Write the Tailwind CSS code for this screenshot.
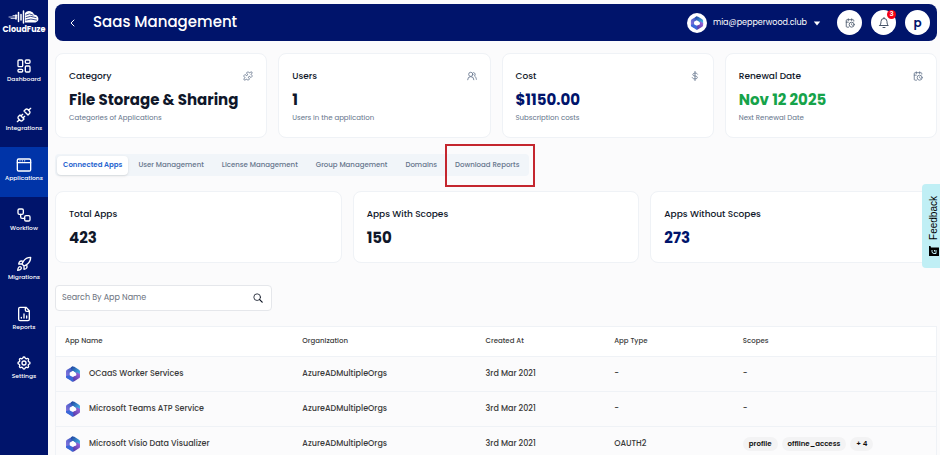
<!DOCTYPE html>
<html lang="en">
<head>
  <meta charset="UTF-8">
  <meta name="viewport" content="width=device-width, initial-scale=1.0">
  <title>Saas Management</title>
  <script src="https://cdn.jsdelivr.net/npm/@tailwindcss/browser@4"></script>
</head>
<body class="bg-[#fbfbfc] font-['Poppins','Inter',sans-serif] text-[#0f172a]">
  <!-- shared icons -->
  <svg class="absolute size-0" aria-hidden="true">
    <defs>
      <linearGradient id="m1" x1="0" y1="1" x2="1" y2="0"><stop offset="0" stop-color="#9a7be6"/><stop offset="1" stop-color="#2150b8"/></linearGradient>
      <linearGradient id="m2" x1="0" y1="0" x2="1" y2="1"><stop offset="0" stop-color="#1d3f9c"/><stop offset="1" stop-color="#4cc3f0"/></linearGradient>
      <linearGradient id="m3" x1="1" y1="0" x2="0" y2="1"><stop offset="0" stop-color="#a56be0"/><stop offset="1" stop-color="#43309c"/></linearGradient>
      <symbol id="m365" viewBox="0 0 24 24">
        <path fill="url(#m1)" d="M12 .5 3 5.500Q1.500 6.400 1.500 8v8q0 1.600 1.500 2.500l4 1.700V10l6-3.500z"/>
        <path fill="url(#m2)" d="M10 1.300Q12 .2 14 1.300l7 4.200Q22.500 6.400 22.500 8v5.500L17 11.500 12 7.500Q9 6 9 3.500 9 1.900 10 1.300z"/>
        <path fill="url(#m3)" d="M22.500 12v4q0 1.600-1.500 2.500l-7 4.200q-2 1.100-4 0L9 17l8-3V9z"/>
        <path fill="#3a68d8" d="M1.500 15v1q0 1.600 1.500 2.500l7 4.200q1.500.8 3 .3l-1-6-5-3z"/>
        <path fill="#fff" d="m12.500 8 3.500 2.300v4L12 16.300l-4-2.300v-3.700z"/>
      </symbol>
      <symbol id="calendar-clock" viewBox="0 0 24 24" fill="none" stroke="currentColor" stroke-width="2" stroke-linecap="round" stroke-linejoin="round">
        <path d="M21 7.500V6a2 2 0 0 0-2-2H5a2 2 0 0 0-2 2v14a2 2 0 0 0 2 2h3.500M16 2v4M8 2v4M3 10h5M17.500 17.500 16 16.300V14"/><circle cx="16" cy="16" r="6"/>
      </symbol>
    </defs>
  </svg>

  <div class="flex h-screen overflow-hidden">
    <aside class="flex w-12 shrink-0 flex-col bg-[#00146b] pb-15 text-white">
      <a href="#" class="flex h-12 flex-col items-center pt-2.5">
        <svg class="h-3.5 w-8" viewBox="0 0 64 28" fill="none" stroke="#fff" stroke-linecap="round">
          <path stroke-width="1.500" d="M2 14h16M6 17h10M10 11h8"/>
          <path stroke-width="3" d="M16 10v8M21 5v18M26 9v11M31 2v24"/>
          <path fill="#fff" stroke="none" d="M34 6q5-6 11-3.500Q51 4 52 9q6 0 8 5 3 8-5 11H34z"/>
          <path stroke="#00146b" stroke-width="1.500" d="M36 10q7-5 14 0M36 15q9-5 20 0M36 20q9-4 21 0"/>
        </svg>
        <span class="text-[8px] leading-3 font-bold">CloudFuze</span>
      </a>
      <nav class="flex flex-1 flex-col text-[6px] leading-2.5 font-medium">
        <a href="#" class="flex flex-1 flex-col items-center justify-center pb-1">
          <svg class="size-4" viewBox="0 0 24 24" fill="none" stroke="currentColor" stroke-width="2" stroke-linejoin="round"><rect x="3" y="3" width="7" height="10" rx="1.500"/><rect x="14" y="3" width="7" height="5" rx="1.500"/><rect x="14" y="12" width="7" height="9" rx="1.500"/><rect x="3" y="17" width="7" height="4" rx="1.500"/></svg>
          Dashboard
        </a>
        <a href="#" class="flex flex-1 flex-col items-center justify-center pb-1">
          <svg class="size-4" viewBox="0 0 24 24" fill="none" stroke="currentColor" stroke-width="2" stroke-linecap="round" stroke-linejoin="round"><path d="m19 5 3-3M2 22l3-3M6.300 20.300a2.400 2.400 0 0 0 3.400 0L12 18l-6-6-2.300 2.300a2.400 2.400 0 0 0 0 3.400zM7.500 13.500 10 11M10.500 16.500 13 14M12 6l6 6 2.300-2.300a2.400 2.400 0 0 0 0-3.400l-2.600-2.600a2.400 2.400 0 0 0-3.400 0z"/></svg>
          Integrations
        </a>
        <a href="#" class="flex flex-1 flex-col items-center justify-center bg-[#0034a8] pb-1">
          <svg class="size-4" viewBox="0 0 24 24" fill="none" stroke="currentColor" stroke-width="2" stroke-linecap="round" stroke-linejoin="round"><rect x="2" y="3" width="20" height="18" rx="2"/><path d="M2 8.500h20M6 5.800h.01M9.500 5.800h.01M13 5.800h.01"/></svg>
          Applications
        </a>
        <a href="#" class="flex flex-1 flex-col items-center justify-center pb-1">
          <svg class="size-4" viewBox="0 0 24 24" fill="none" stroke="currentColor" stroke-width="2" stroke-linecap="round" stroke-linejoin="round"><rect x="3" y="3" width="8" height="8" rx="2"/><path d="M7 11v4a2 2 0 0 0 2 2h4"/><rect x="13" y="13" width="8" height="8" rx="2"/></svg>
          Workflow
        </a>
        <a href="#" class="flex flex-1 flex-col items-center justify-center pb-1">
          <svg class="size-4" viewBox="0 0 24 24" fill="none" stroke="currentColor" stroke-width="2" stroke-linecap="round" stroke-linejoin="round"><path d="M4.500 16.500c-1.500 1.260-2 5-2 5s3.740-.5 5-2c.71-.84.7-2.130-.09-2.910a2.180 2.180 0 0 0-2.910-.09zM12 15l-3-3a22 22 0 0 1 2-3.950A12.880 12.880 0 0 1 22 2c0 2.720-.78 7.500-6 11a22.350 22.350 0 0 1-4 2zM9 12H4s.55-3.030 2-4c1.620-1.080 5 0 5 0M12 15v5s3.030-.55 4-2c1.080-1.620 0-5 0-5"/></svg>
          Migrations
        </a>
        <a href="#" class="flex flex-1 flex-col items-center justify-center pb-1">
          <svg class="size-4" viewBox="0 0 24 24" fill="none" stroke="currentColor" stroke-width="2" stroke-linecap="round" stroke-linejoin="round"><path d="M15 2H6a2 2 0 0 0-2 2v16a2 2 0 0 0 2 2h12a2 2 0 0 0 2-2V7zM14 2v4a2 2 0 0 0 2 2h4M8 18v-1M12 18v-6M16 18v-3"/></svg>
          Reports
        </a>
        <a href="#" class="flex flex-1 flex-col items-center justify-center pb-1">
          <svg class="size-4" viewBox="0 0 24 24" fill="none" stroke="currentColor" stroke-width="2" stroke-linecap="round" stroke-linejoin="round"><path d="M10.300 4.300c.4-1.750 2.970-1.750 3.400 0a1.720 1.720 0 0 0 2.570 1.070c1.540-.94 3.300.82 2.370 2.370a1.720 1.720 0 0 0 1.060 2.570c1.760.43 1.760 2.930 0 3.360a1.720 1.720 0 0 0-1.060 2.570c.94 1.540-.83 3.310-2.370 2.370a1.720 1.720 0 0 0-2.570 1.070c-.43 1.750-2.970 1.750-3.400 0a1.720 1.720 0 0 0-2.570-1.070c-1.540.94-3.310-.83-2.370-2.370a1.720 1.720 0 0 0-1.060-2.570c-1.760-.43-1.760-2.930 0-3.360a1.720 1.720 0 0 0 1.060-2.570c-.94-1.540.83-3.310 2.370-2.370 1 .6 2.300.07 2.570-1.070z"/><circle cx="12" cy="12" r="3"/></svg>
          Settings
        </a>
      </nav>
    </aside>

    <main class="flex min-w-0 flex-1 flex-col pt-1 pr-[3px] pl-[7px]">
      <header class="flex h-[37px] shrink-0 items-center rounded-lg bg-[#00146b] pr-[7px] pl-3 text-white">
        <button type="button" aria-label="Back">
          <svg class="size-3" viewBox="0 0 24 24" fill="none" stroke="currentColor" stroke-width="2" stroke-linecap="round" stroke-linejoin="round"><path d="m14 6-6 6 6 6"/></svg>
        </button>
        <h1 class="ml-3.5 text-[15px] font-medium">Saas Management</h1>
        <button type="button" class="ml-auto flex items-center gap-1.5 text-[8px]">
          <span class="flex size-5 items-center justify-center rounded-full bg-white"><svg class="size-3.5"><use href="#m365"/></svg></span>
          <span>mia@pepperwood.club</span>
          <svg class="size-2" viewBox="0 0 10 10" fill="currentColor"><path d="M1 3h8L5 8z"/></svg>
        </button>
        <div class="ml-4 flex gap-[9px] text-[#475569]">
          <button type="button" aria-label="Schedule" class="flex size-[25px] items-center justify-center rounded-full bg-white"><svg class="size-2.5"><use href="#calendar-clock"/></svg></button>
          <button type="button" aria-label="Notifications" class="relative flex size-[25px] items-center justify-center rounded-full bg-white">
            <svg class="size-3" viewBox="0 0 24 24" fill="none" stroke="currentColor" stroke-width="2" stroke-linecap="round" stroke-linejoin="round"><path d="M10 21h4M12 1v2M3.500 17h17C19 15.500 18 13.500 18 9A6 6 0 0 0 6 9c0 4.500-1 6.500-2.500 8z"/></svg>
            <span class="absolute top-0 right-0 flex size-[9px] items-center justify-center rounded-full bg-[#f30014] text-[7px] font-semibold text-white">3</span>
          </button>
          <button type="button" aria-label="Profile" class="flex size-[25px] items-center justify-center rounded-full bg-white text-[12px] leading-4 font-semibold text-[#00146b]">p</button>
        </div>
      </header>

      <section class="mt-3 grid grid-cols-4 gap-[11px]">
        <div class="rounded-lg border border-[#eff2f6] bg-white px-[13px] pt-4 pb-3.5">
          <div class="flex items-center justify-between">
            <h2 class="text-[9px] leading-3 font-medium">Category</h2>
            <svg class="size-2.5 text-[#64748b]" viewBox="0 0 24 24" fill="none" stroke="currentColor" stroke-width="2" stroke-linejoin="round"><path d="M15.390 4.390a1 1 0 0 0 1.680-.474 2.500 2.500 0 1 1 3.014 3.015 1 1 0 0 0-.474 1.680l1.683 1.682a2.414 2.414 0 0 1 0 3.414L19.610 15.390a1 1 0 0 1-1.680-.474 2.500 2.500 0 1 0-3.014 3.015 1 1 0 0 1 .474 1.680l-1.683 1.682a2.414 2.414 0 0 1-3.414 0L8.610 19.610a1 1 0 0 0-1.680.474 2.500 2.500 0 1 1-3.014-3.015 1 1 0 0 0 .474-1.680l-1.683-1.682a2.414 2.414 0 0 1 0-3.414L4.390 8.610a1 1 0 0 1 1.680.474 2.500 2.500 0 1 0 3.014-3.015 1 1 0 0 1-.474-1.680l1.683-1.682a2.414 2.414 0 0 1 3.414 0z"/></svg>
          </div>
          <p class="mt-2 text-[15px] leading-5 font-bold whitespace-nowrap">File Storage &amp; Sharing</p>
          <p class="mt-[3px] text-[7px] leading-2.5 text-[#64748b]">Categories of Applications</p>
        </div>
        <div class="rounded-lg border border-[#eff2f6] bg-white px-[13px] pt-4 pb-3.5">
          <div class="flex items-center justify-between">
            <h2 class="text-[9px] leading-3 font-medium">Users</h2>
            <svg class="size-2.5 text-[#64748b]" viewBox="0 0 24 24" fill="none" stroke="currentColor" stroke-width="2" stroke-linecap="round"><circle cx="9" cy="8" r="5"/><path d="M1.500 21a7.500 7.500 0 0 1 15 0M16 3.500a5 5 0 0 1 2 8.500c2.500 1.500 4 4 4.500 8"/></svg>
          </div>
          <p class="mt-2 text-[15px] leading-5 font-bold whitespace-nowrap">1</p>
          <p class="mt-[3px] text-[7px] leading-2.5 text-[#64748b]">Users in the application</p>
        </div>
        <div class="rounded-lg border border-[#eff2f6] bg-white px-[13px] pt-4 pb-3.5">
          <div class="flex items-center justify-between">
            <h2 class="text-[9px] leading-3 font-medium">Cost</h2>
            <svg class="size-2.5 text-[#64748b]" viewBox="0 0 24 24" fill="none" stroke="currentColor" stroke-width="2" stroke-linecap="round"><path d="M12 1v22M18 7.500C17 5.500 15 5 12 5c-7 0-7 7 0 7s8 7 0 7c-4 0-5.500-1-6.500-3"/></svg>
          </div>
          <p class="mt-2 text-[15px] leading-5 font-bold whitespace-nowrap text-[#00146b]">$1150.00</p>
          <p class="mt-[3px] text-[7px] leading-2.5 text-[#64748b]">Subscription costs</p>
        </div>
        <div class="rounded-lg border border-[#eff2f6] bg-white px-[13px] pt-4 pb-3.5">
          <div class="flex items-center justify-between">
            <h2 class="text-[9px] leading-3 font-medium">Renewal Date</h2>
            <svg class="size-2.5 text-[#64748b]"><use href="#calendar-clock"/></svg>
          </div>
          <p class="mt-2 text-[15px] leading-5 font-bold whitespace-nowrap text-[#16a34a]">Nov 12 2025</p>
          <p class="mt-[3px] text-[7px] leading-2.5 text-[#64748b]">Next Renewal Date</p>
        </div>
      </section>

      <div class="mt-4 flex h-[22px] shrink-0 items-center gap-0.5 self-start rounded bg-[#f1f5f9] px-0.5 text-[7px] font-medium whitespace-nowrap text-[#64748b]">
        <button type="button" class="h-[19px] rounded-sm bg-white px-1.5 font-semibold text-[#2563cf] shadow-sm">Connected Apps</button>
        <button type="button" class="px-2">User Management</button>
        <button type="button" class="px-2">License Management</button>
        <button type="button" class="px-2">Group Management</button>
        <button type="button" class="px-2">Domains</button>
        <button type="button" class="relative h-[19px] px-2">
          Download Reports
          <span class="absolute -inset-y-3 -right-2 -left-0.5 border-2 border-[#c4262e]"></span>
        </button>
      </div>

      <section class="mt-[15px] grid grid-cols-3 gap-[11px]">
        <div class="rounded-lg border border-[#eff2f6] bg-white px-[13px] pt-4 pb-3.5">
          <h2 class="text-[9px] leading-3 font-medium">Total Apps</h2>
          <p class="mt-2 text-[15px] leading-5 font-bold">423</p>
        </div>
        <div class="rounded-lg border border-[#eff2f6] bg-white px-[13px] pt-4 pb-3.5">
          <h2 class="text-[9px] leading-3 font-medium">Apps With Scopes</h2>
          <p class="mt-2 text-[15px] leading-5 font-bold">150</p>
        </div>
        <div class="rounded-lg border border-[#eff2f6] bg-white px-[13px] pt-4 pb-3.5">
          <h2 class="text-[9px] leading-3 font-medium">Apps Without Scopes</h2>
          <p class="mt-2 text-[15px] leading-5 font-bold text-[#00146b]">273</p>
        </div>
      </section>

      <form class="mt-[22px] flex h-[26px] w-[217px] shrink-0 items-center rounded-sm border border-[#e5e7eb] bg-white pr-2 pl-1.5">
        <input type="search" aria-label="Search by app name" placeholder="Search By App Name" class="min-w-0 flex-1 text-[8px] outline-none placeholder:text-[#6b7280]">
        <button type="button" aria-label="Search">
          <svg class="size-2.5 text-[#111827]" viewBox="0 0 24 24" fill="none" stroke="currentColor" stroke-width="2" stroke-linecap="round"><circle cx="10" cy="10" r="8"/><path stroke-width="3" d="m16 16 6 6"/></svg>
        </button>
      </form>

      <table class="mt-[15px] w-full table-fixed border border-[#eff2f6] text-left text-[8px] text-[#3a3a3a]">
        <thead class="bg-white text-[7px]">
          <tr class="h-[30px] border-b border-[#eff2f6]">
            <th class="w-[27%] px-[9px] font-medium">App Name</th>
            <th class="w-[20.8%] px-[9px] font-medium">Organization</th>
            <th class="w-[14.6%] px-[9px] font-medium">Created At</th>
            <th class="w-[14.6%] px-[9px] font-medium">App Type</th>
            <th class="px-[9px] font-medium">Scopes</th>
          </tr>
        </thead>
        <tbody class="font-medium">
          <tr class="h-[35px] border-b border-[#eff2f6]">
            <td class="px-[9px]"><div class="flex items-center gap-2"><svg class="size-4"><use href="#m365"/></svg>OCaaS Worker Services</div></td>
            <td class="px-[9px]">AzureADMultipleOrgs</td>
            <td class="px-[9px]">3rd Mar 2021</td>
            <td class="px-[9px]">-</td>
            <td class="px-[9px]">-</td>
          </tr>
          <tr class="h-[35px] border-b border-[#eff2f6]">
            <td class="px-[9px]"><div class="flex items-center gap-2"><svg class="size-4"><use href="#m365"/></svg>Microsoft Teams ATP Service</div></td>
            <td class="px-[9px]">AzureADMultipleOrgs</td>
            <td class="px-[9px]">3rd Mar 2021</td>
            <td class="px-[9px]">-</td>
            <td class="px-[9px]">-</td>
          </tr>
          <tr class="h-[35px] border-b border-[#eff2f6]">
            <td class="px-[9px]"><div class="flex items-center gap-2"><svg class="size-4"><use href="#m365"/></svg>Microsoft Visio Data Visualizer</div></td>
            <td class="px-[9px]">AzureADMultipleOrgs</td>
            <td class="px-[9px]">3rd Mar 2021</td>
            <td class="px-[9px]">OAUTH2</td>
            <td class="px-[9px]">
              <div class="flex gap-1 text-[7px] leading-3.5 font-semibold whitespace-nowrap text-[#111]">
                <span class="rounded-full bg-[#f3f3f4] px-1.5">profile</span>
                <span class="rounded-full bg-[#f3f3f4] px-1.5">offline_access</span>
                <span class="rounded-full bg-[#f3f3f4] px-1.5">+ 4</span>
              </div>
            </td>
          </tr>
        </tbody>
      </table>
    </main>
  </div>

  <button type="button" class="fixed top-[184px] right-0 flex h-[84px] w-[18px] flex-col items-center justify-center gap-1.5 rounded-l-sm bg-[#c0eff5] pl-1.5 text-black">
    <span class="rotate-180 font-['Liberation_Sans',sans-serif] text-[10px] leading-3 [writing-mode:vertical-rl]">Feedback</span>
    <svg class="size-2.5" viewBox="0 0 20 20"><path d="M0 0h3l1 3h16v17H0z"/><path d="M6 8v3q0 4 4 4h4V8M11 8v3" fill="none" stroke="#c0eff5" stroke-width="2"/></svg>
  </button>
</body>
</html>
